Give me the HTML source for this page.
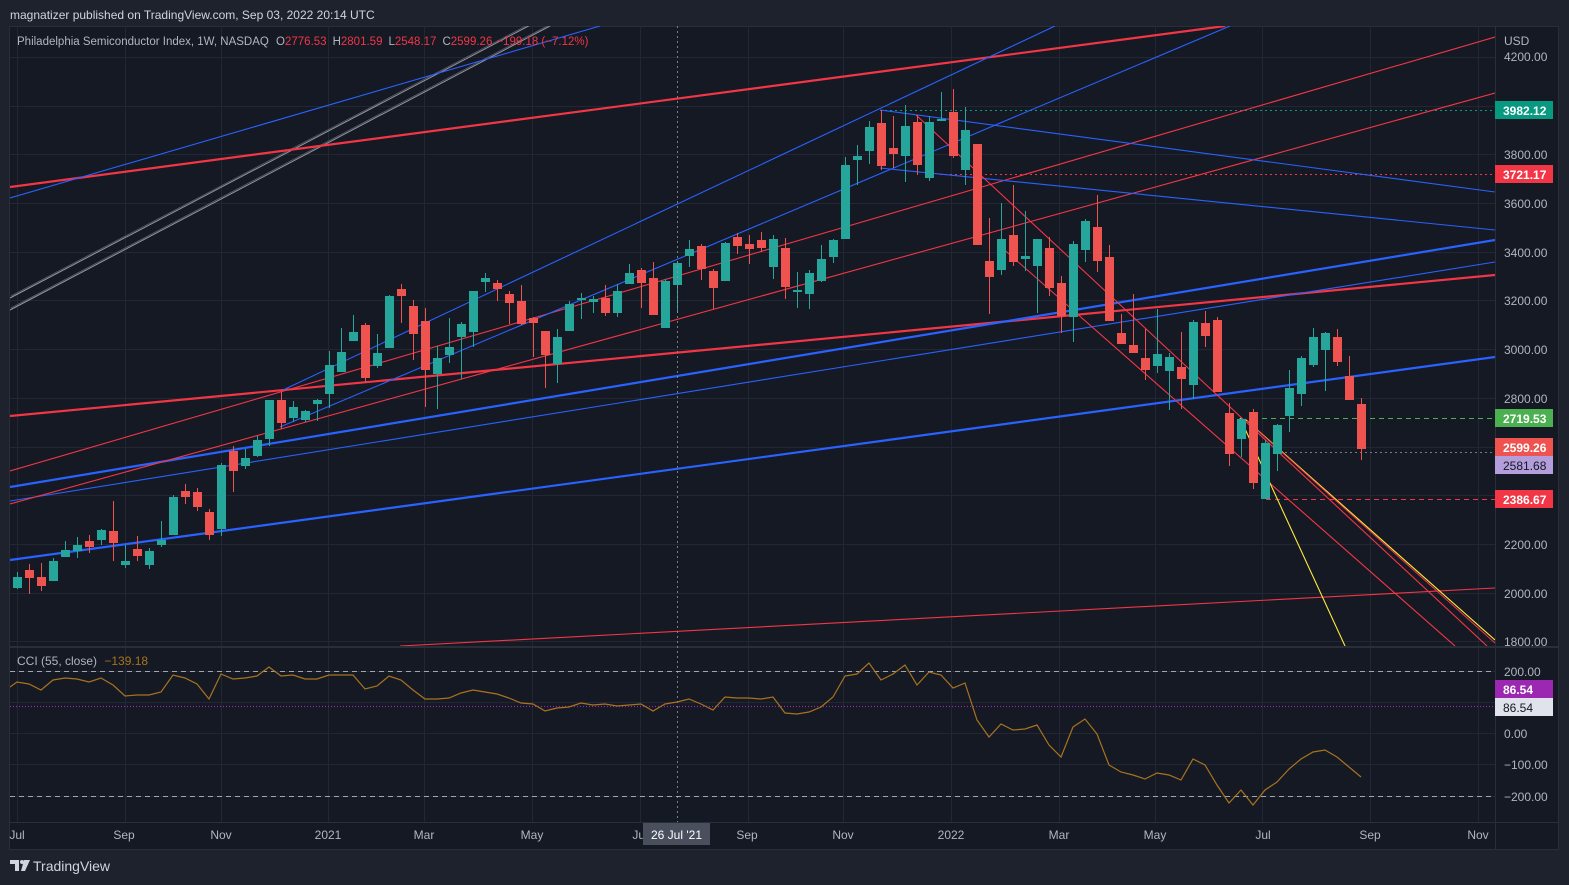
<!DOCTYPE html>
<html><head><meta charset="utf-8"><style>
html,body{margin:0;padding:0;background:#1e222d;width:1569px;height:885px;overflow:hidden}
svg{display:block}
text{font-family:"Liberation Sans",sans-serif}
</style></head><body>
<svg width="1569" height="885" viewBox="0 0 1569 885" xmlns="http://www.w3.org/2000/svg">
<defs>
<clipPath id="cp"><rect x="10" y="26" width="1485" height="620"/></clipPath>
<clipPath id="cc"><rect x="10" y="648" width="1485" height="174"/></clipPath>
</defs>
<rect width="1569" height="885" fill="#1e222d"/>
<text x="10" y="19" font-size="12" fill="#d1d4dc">magnatizer published on TradingView.com, Sep 03, 2022 20:14 UTC</text>
<rect x="9.5" y="26.5" width="1549" height="823" fill="#151924" stroke="#2a2e39"/>
<g stroke="#232733" stroke-width="1">
<path d="M10 57.5H1495M10 106.5H1495M10 154.5H1495M10 203.5H1495M10 252.5H1495M10 300.5H1495M10 349.5H1495M10 398.5H1495M10 447.5H1495M10 495.5H1495M10 544.5H1495M10 593.5H1495M10 641.5H1495"/>
<path d="M10 671.5H1495M10 702.5H1495M10 733.5H1495M10 764.5H1495M10 796.5H1495"/>
<path d="M17.5 26V822M125.5 26V822M221.5 26V822M328.5 26V822M424.5 26V822M532.5 26V822M640.5 26V822M748.5 26V822M843.5 26V822M951.5 26V822M1059.5 26V822M1155.5 26V822M1262.5 26V822M1370.5 26V822M1478.5 26V822"/>
</g>
<rect x="10" y="646" width="1548" height="2" fill="#2a2e39"/>
<rect x="10" y="822" width="1548" height="1" fill="#2a2e39"/>
<rect x="1495" y="26" width="1" height="823" fill="#2a2e39"/>
<g clip-path="url(#cp)" fill="none">
<path d="M880 110.5H1495" stroke="#089981" stroke-dasharray="2 3"/>
<path d="M940 174.5H1495" stroke="#f23645" stroke-dasharray="2 3"/>
<path d="M1262 418.5H1495" stroke="#4caf50" stroke-dasharray="5 4"/>
<path d="M1280 452.5H1495" stroke="#787b86" stroke-dasharray="2 3"/>
<path d="M1266 499.5H1495" stroke="#f23645" stroke-dasharray="5 4"/>
<path d="M10 298L540 20M10 310L550 26" stroke="#9598a1" stroke-width="1"/>
<path d="M11 296L541 18M11 308L551 24" stroke="#5d606b" stroke-width="0.8"/>
<path d="M10 187L1225 26" stroke="#f23645" stroke-width="2.2"/>
<path d="M10 416L1495 275" stroke="#f23645" stroke-width="2.2"/>
<path d="M10 487L1495 240" stroke="#2962ff" stroke-width="2.2"/>
<path d="M10 501L1495 262" stroke="#2962ff" stroke-width="1.1"/>
<path d="M10 560L1495 357" stroke="#2962ff" stroke-width="2.2"/>
<path d="M10 504L1495 93" stroke="#f23645" stroke-width="1.1"/>
<path d="M10 471L1495 37" stroke="#f23645" stroke-width="1.1"/>
<path d="M10 198L600 26" stroke="#2962ff" stroke-width="1.1"/>
<path d="M283 390L1055 26" stroke="#2962ff" stroke-width="1.1"/>
<path d="M280 427L1230 26" stroke="#2962ff" stroke-width="1.1"/>
<path d="M880 110L1495 192" stroke="#2962ff" stroke-width="1.1"/>
<path d="M880 168L1495 230" stroke="#2962ff" stroke-width="1.1"/>
<path d="M916 115L1487 646" stroke="#f23645" stroke-width="1.1"/>
<path d="M1000 246L1455 646" stroke="#f23645" stroke-width="1.1"/>
<path d="M400 646L1495 588" stroke="#f23645" stroke-width="1.1"/>
<path d="M1240 418L1345 646" stroke="#ffeb3b" stroke-width="1.1"/>
<path d="M1245 419L1495 640" stroke="#ffeb3b" stroke-width="1.1"/>
<path d="M1247 421L1495 643" stroke="#f23645" stroke-width="1"/>
<path stroke="#26a69a" d="M17.5 572V589M53.5 558V581M65.5 541V557M77.5 537V558M101.5 529V545M125.5 545V568M149.5 548V569M161.5 521V547M173.5 495V535M221.5 463V536M245.5 449V469M257.5 436V457M269.5 400V446M293.5 401V422M305.5 410V422M317.5 399V421M329.5 351V408M341.5 328V372M353.5 315V341M377.5 334V368M389.5 295V348M437.5 346V409M449.5 318V363M461.5 322V379M473.5 291V347M485.5 273V292M557.5 329V383M569.5 301V331M581.5 293V319M593.5 296V313M617.5 284V317M629.5 264V284M665.5 279V328M677.5 261V313M689.5 240V267M725.5 242V281M773.5 235V279M797.5 272V308M809.5 270V309M821.5 245V282M833.5 239V263M845.5 157V239M857.5 145V185M869.5 121V164M905.5 105V182M929.5 116V181M941.5 92V120M965.5 107V185M1001.5 203V275M1025.5 211V271M1037.5 239V313M1073.5 241V342M1085.5 219V262M1157.5 309V373M1169.5 353V410M1193.5 320V399M1241.5 418V457M1265.5 440V499M1277.5 424V471M1289.5 370V432M1301.5 356V406M1313.5 328V367M1325.5 332V391"/>
<path stroke="#ef5350" d="M29.5 564V594M41.5 563V591M89.5 535V553M113.5 501V561M137.5 536V561M185.5 484V504M197.5 488V511M209.5 509V540M233.5 446V492M281.5 392V429M365.5 323V382M401.5 284V323M413.5 300V360M425.5 308V407M497.5 280V301M509.5 291V324M521.5 285V325M533.5 317V357M545.5 331V388M605.5 285V316M641.5 268V308M653.5 262V315M701.5 244V280M713.5 269V309M737.5 233V254M749.5 235V264M761.5 232V252M785.5 238V299M881.5 110V170M893.5 116V168M917.5 115V175M953.5 89V158M977.5 144V245M989.5 218V314M1013.5 185V266M1049.5 237V296M1061.5 276V333M1097.5 195V272M1109.5 245V321M1121.5 314V344M1133.5 294V353M1145.5 329V380M1181.5 332V409M1205.5 311V347M1217.5 317V392M1229.5 403V466M1253.5 409V489M1337.5 329V366M1349.5 356V400M1361.5 398V460"/>
<g fill="#26a69a">
<rect x="13" y="577" width="9" height="11"/><rect x="49" y="561" width="9" height="20"/><rect x="61" y="550" width="9" height="7"/><rect x="73" y="545" width="9" height="6"/><rect x="97" y="530" width="9" height="10"/><rect x="121" y="561" width="9" height="4"/><rect x="145" y="551" width="9" height="14"/><rect x="157" y="540" width="9" height="5"/><rect x="169" y="497" width="9" height="38"/><rect x="217" y="465" width="9" height="64"/><rect x="241" y="458" width="9" height="8"/><rect x="253" y="440" width="9" height="16"/><rect x="265" y="400" width="9" height="39"/><rect x="289" y="407" width="9" height="11"/><rect x="301" y="411" width="9" height="9"/><rect x="313" y="400" width="9" height="4"/><rect x="325" y="365" width="9" height="29"/><rect x="337" y="352" width="9" height="20"/><rect x="349" y="332" width="9" height="9"/><rect x="373" y="353" width="9" height="13"/><rect x="385" y="296" width="9" height="52"/><rect x="433" y="358" width="9" height="16"/><rect x="445" y="347" width="9" height="8"/><rect x="457" y="324" width="9" height="13"/><rect x="469" y="291" width="9" height="41"/><rect x="481" y="278" width="9" height="4"/><rect x="553" y="337" width="9" height="27"/><rect x="565" y="304" width="9" height="27"/><rect x="577" y="298" width="9" height="2"/><rect x="589" y="299" width="9" height="3"/><rect x="613" y="291" width="9" height="22"/><rect x="625" y="273" width="9" height="11"/><rect x="661" y="281" width="9" height="47"/><rect x="673" y="263" width="9" height="22"/><rect x="685" y="249" width="9" height="7"/><rect x="721" y="243" width="9" height="38"/><rect x="769" y="239" width="9" height="28"/><rect x="793" y="290" width="9" height="2"/><rect x="805" y="273" width="9" height="21"/><rect x="817" y="259" width="9" height="22"/><rect x="829" y="240" width="9" height="17"/><rect x="841" y="165" width="9" height="74"/><rect x="853" y="156" width="9" height="4"/><rect x="865" y="127" width="9" height="24"/><rect x="901" y="126" width="9" height="30"/><rect x="925" y="122" width="9" height="56"/><rect x="937" y="119" width="9" height="2"/><rect x="961" y="130" width="9" height="40"/><rect x="997" y="239" width="9" height="31"/><rect x="1021" y="256" width="9" height="3"/><rect x="1033" y="239" width="9" height="27"/><rect x="1069" y="244" width="9" height="73"/><rect x="1081" y="221" width="9" height="29"/><rect x="1153" y="354" width="9" height="12"/><rect x="1165" y="357" width="9" height="14"/><rect x="1189" y="322" width="9" height="63"/><rect x="1237" y="419" width="9" height="20"/><rect x="1261" y="443" width="9" height="56"/><rect x="1273" y="425" width="9" height="29"/><rect x="1285" y="388" width="9" height="28"/><rect x="1297" y="358" width="9" height="36"/><rect x="1309" y="337" width="9" height="28"/><rect x="1321" y="333" width="9" height="17"/>
</g>
<g fill="#ef5350">
<rect x="25" y="570" width="9" height="8"/><rect x="37" y="577" width="9" height="9"/><rect x="85" y="541" width="9" height="6"/><rect x="109" y="531" width="9" height="12"/><rect x="133" y="549" width="9" height="7"/><rect x="181" y="491" width="9" height="6"/><rect x="193" y="492" width="9" height="15"/><rect x="205" y="512" width="9" height="23"/><rect x="229" y="451" width="9" height="20"/><rect x="277" y="400" width="9" height="23"/><rect x="361" y="325" width="9" height="53"/><rect x="397" y="289" width="9" height="7"/><rect x="409" y="306" width="9" height="28"/><rect x="421" y="321" width="9" height="49"/><rect x="493" y="283" width="9" height="6"/><rect x="505" y="294" width="9" height="9"/><rect x="517" y="301" width="9" height="23"/><rect x="529" y="318" width="9" height="5"/><rect x="541" y="331" width="9" height="24"/><rect x="601" y="298" width="9" height="15"/><rect x="637" y="270" width="9" height="13"/><rect x="649" y="278" width="9" height="37"/><rect x="697" y="246" width="9" height="23"/><rect x="709" y="271" width="9" height="17"/><rect x="733" y="237" width="9" height="9"/><rect x="745" y="244" width="9" height="5"/><rect x="757" y="240" width="9" height="8"/><rect x="781" y="248" width="9" height="39"/><rect x="877" y="123" width="9" height="43"/><rect x="889" y="148" width="9" height="6"/><rect x="913" y="122" width="9" height="43"/><rect x="949" y="112" width="9" height="44"/><rect x="973" y="144" width="9" height="101"/><rect x="985" y="261" width="9" height="16"/><rect x="1009" y="235" width="9" height="27"/><rect x="1045" y="248" width="9" height="40"/><rect x="1057" y="283" width="9" height="33"/><rect x="1093" y="227" width="9" height="34"/><rect x="1105" y="257" width="9" height="64"/><rect x="1117" y="333" width="9" height="11"/><rect x="1129" y="345" width="9" height="8"/><rect x="1141" y="358" width="9" height="12"/><rect x="1177" y="367" width="9" height="12"/><rect x="1201" y="323" width="9" height="13"/><rect x="1213" y="320" width="9" height="72"/><rect x="1225" y="413" width="9" height="41"/><rect x="1249" y="412" width="9" height="71"/><rect x="1333" y="337" width="9" height="25"/><rect x="1345" y="376" width="9" height="24"/><rect x="1357" y="404" width="9" height="45"/>
</g>
</g>
<path d="M677.5 26V822" stroke="#9598a1" stroke-dasharray="2 3" opacity="0.8"/>
<text x="17" y="45" font-size="11.5" fill="#b2b5be">Philadelphia Semiconductor Index, 1W, NASDAQ <tspan dx="4">O</tspan><tspan fill="#f23645">2776.53</tspan><tspan dx="6">H</tspan><tspan fill="#f23645">2801.59</tspan><tspan dx="6">L</tspan><tspan fill="#f23645">2548.17</tspan><tspan dx="6">C</tspan><tspan fill="#f23645">2599.26</tspan><tspan dx="4" fill="#f23645">−199.18 (−7.12%)</tspan></text>
<g clip-path="url(#cc)">
<path d="M10 671.5H1495M10 796.5H1495" stroke="#c3c6ce" stroke-dasharray="5 4" opacity="0.8"/>
<path d="M10 706.5H1495" stroke="#9c27b0" stroke-dasharray="1 2" stroke-width="1.2"/>
<polyline fill="none" stroke="#a8731e" stroke-width="1.2" points="10,687 17,682 29,684 41,690 53,680 65,678 77,679 89,682 101,678 113,685 125,696 137,695 149,695 161,692 173,675 185,678 197,684 209,699 221,674 233,679 245,678 257,676 269,667 281,676 293,675 305,679 317,679 329,675 341,675 353,675 365,689 377,686 389,676 401,680 413,690 425,699 437,699 449,698 461,693 473,690 485,692 497,694 509,698 521,703 533,704 545,711 557,708 569,707 581,703 593,705 605,704 617,706 629,705 641,704 653,711 665,704 677,702 689,699 701,704 713,710 725,697 737,698 749,698 761,699 773,697 785,713 797,714 809,712 821,707 833,697 845,676 857,674 869,663 881,680 893,674 905,665 917,685 929,672 941,675 953,688 965,683 977,720 989,737 1001,724 1013,730 1025,729 1037,725 1049,745 1061,757 1073,727 1085,719 1097,734 1109,765 1121,772 1133,775 1145,779 1157,773 1169,775 1181,780 1193,759 1205,765 1217,785 1229,803 1241,790 1253,805 1265,790 1277,782 1289,769 1301,759 1313,752 1325,750 1337,757 1349,767 1361,777"/>
</g>
<text x="17" y="665" font-size="12" fill="#b2b5be">CCI (55, close) <tspan dx="4" fill="#a8731e">−139.18</tspan></text>
<g font-size="12" fill="#b2b5be">
<text x="1504" y="45">USD</text>
<text x="1504" y="61">4200.00</text>
<text x="1504" y="159">3800.00</text>
<text x="1504" y="208">3600.00</text>
<text x="1504" y="257">3400.00</text>
<text x="1504" y="305">3200.00</text>
<text x="1504" y="354">3000.00</text>
<text x="1504" y="403">2800.00</text>
<text x="1504" y="549">2200.00</text>
<text x="1504" y="598">2000.00</text>
<text x="1504" y="646">1800.00</text>
<text x="1504" y="676">200.00</text>
<text x="1504" y="738">0.00</text>
<text x="1504" y="769">−100.00</text>
<text x="1504" y="801">−200.00</text>
</g>
<g font-size="12" font-weight="bold" fill="#fff">
<rect x="1495" y="101" width="58" height="18" fill="#089981"/><text x="1503" y="115">3982.12</text>
<rect x="1495" y="165" width="58" height="18" fill="#f23645"/><text x="1503" y="179">3721.17</text>
<rect x="1495" y="409" width="58" height="18" fill="#4caf50"/><text x="1503" y="423">2719.53</text>
<rect x="1495" y="438" width="58" height="18" fill="#ef5350"/><text x="1503" y="452">2599.26</text>
<rect x="1495" y="456" width="58" height="18" fill="#b39ddb"/><text x="1503" y="470" fill="#131722" font-weight="normal">2581.68</text>
<rect x="1495" y="490" width="58" height="18" fill="#f23645"/><text x="1503" y="504">2386.67</text>
<rect x="1495" y="680" width="58" height="18" fill="#9c27b0"/><text x="1503" y="694">86.54</text>
<rect x="1495" y="698" width="58" height="18" fill="#e0e3eb"/><text x="1503" y="712" fill="#131722" font-weight="normal">86.54</text>
</g>
<g font-size="12" fill="#b2b5be" text-anchor="middle">
<text x="17" y="839">Jul</text><text x="124" y="839">Sep</text><text x="221" y="839">Nov</text><text x="328" y="839">2021</text><text x="424" y="839">Mar</text><text x="532" y="839">May</text><text x="640" y="839">Jul</text><text x="747" y="839">Sep</text><text x="843" y="839">Nov</text><text x="951" y="839">2022</text><text x="1059" y="839">Mar</text><text x="1155" y="839">May</text><text x="1263" y="839">Jul</text><text x="1370" y="839">Sep</text><text x="1478" y="839">Nov</text>
</g>
<rect x="643" y="823" width="67" height="22" fill="#4a4f5e"/>
<text x="676.5" y="839" font-size="12" fill="#fff" text-anchor="middle">26 Jul '21</text>
<g fill="#d1d4dc">
<path d="M10 860h9v11h-4v-7h-5z"/><circle cx="22" cy="862" r="2"/><path d="M24 860h6l-5 11h-4z"/>
</g>
<text x="33" y="871" font-size="14" fill="#d1d4dc">TradingView</text>
</svg>
</body></html>
